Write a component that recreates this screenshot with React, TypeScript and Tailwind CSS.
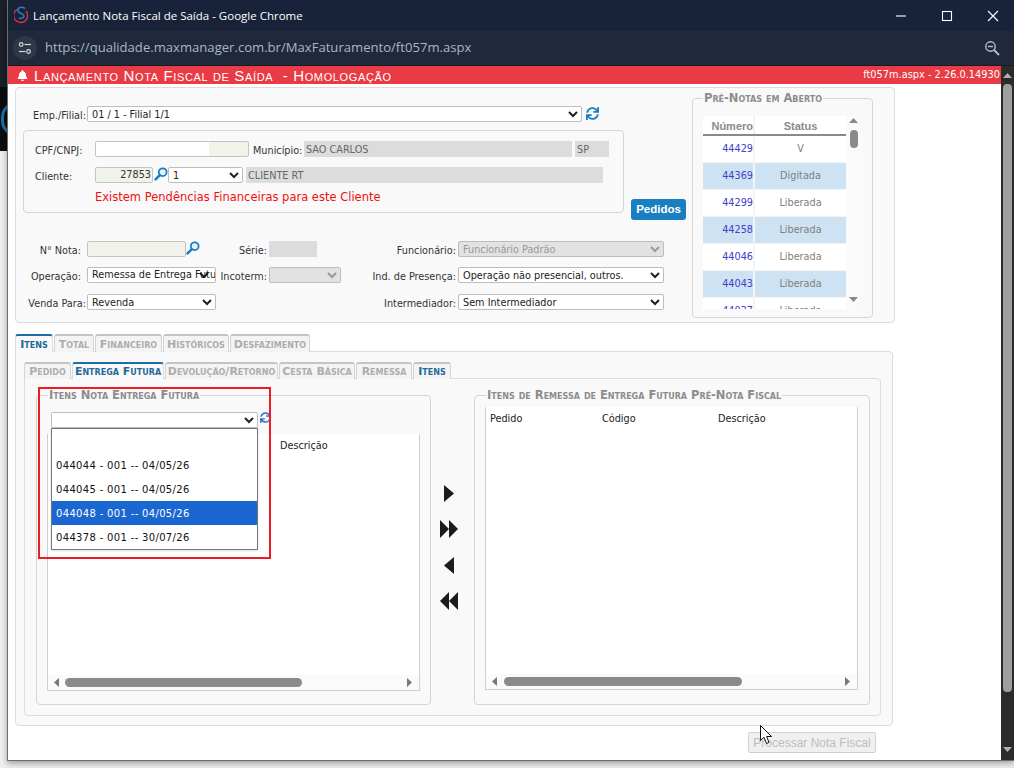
import React from "react";
import { FaBell, FaSync } from "react-icons/fa";

const Tri = ({ dir, w, h, color, className = "" }: { dir: "u" | "d" | "l" | "r"; w: number; h: number; color: string; className?: string }) => {
  const pts = { u: `0,${h} ${w},${h} ${w / 2},0`, d: `0,0 ${w},0 ${w / 2},${h}`, l: `${w},0 ${w},${h} 0,${h / 2}`, r: `0,0 0,${h} ${w},${h / 2}` }[dir];
  return (
    <svg width={w} height={h} className={className}>
      <polygon points={pts} fill={color} />
    </svg>
  );
};

const Mag = () => (
  <svg width="14" height="14" viewBox="0 0 14 14" className="shrink-0">
    <circle cx="8.7" cy="5.2" r="3.9" fill="#e8f2fa" stroke="#1a7fc1" strokeWidth="1.8" />
    <line x1="5.8" y1="8.2" x2="1.6" y2="12.4" stroke="#1a7fc1" strokeWidth="2.6" strokeLinecap="round" />
  </svg>
);

const Lbl = ({ w, children }: { w: string; children: React.ReactNode }) => <span className={`${w} shrink-0 text-right whitespace-nowrap text-[#333] pt-[3px]`}>{children}</span>;

const Sel = ({ w, v, disabled }: { w: string; v: string; disabled?: boolean }) => (
  <select
    disabled={disabled}
    defaultValue={v}
    className={`${w} h-[16px] shrink-0 rounded-[2px] border border-[#bdbdbd] pl-0 ${disabled ? "bg-[#e2e2e2] text-[#999]" : "bg-white text-[#222]"}`}
  >
    <option>{v}</option>
  </select>
);

const Gray = ({ w, children }: { w: string; children?: React.ReactNode }) => <div className={`${w} h-[16px] shrink-0 bg-[#dcdcdc] pl-[2px] leading-[17px] text-[#666] whitespace-nowrap overflow-hidden`}>{children}</div>;

const Tab = ({ w, h = "h-[18px]", label, active, blue }: { w: string; h?: string; label: string; active?: boolean; blue?: boolean }) => (
  <div
    className={`${w} ${h} relative top-[1px] flex shrink-0 items-center justify-center whitespace-nowrap rounded-t-[3px] border border-b-0 border-t-2 text-[11px] font-bold leading-none [font-variant:small-caps] ${
      active ? "border-[#dddddd] border-t-[#1a6ea8] bg-[#f9f9f9] text-[#1f6a99]" : `border-[#d4d4d4] border-t-[#c4c4c4] bg-[#f4f4f4] ${blue ? "text-[#1f6a99]" : "text-[#adadad]"}`
    }`}
  >
    {label}
  </div>
);

const Legend = ({ left, children }: { left: string; children: React.ReactNode }) => (
  <div className={`absolute ${left} top-[-7px] whitespace-nowrap bg-[#f9f9f9] px-[1px] text-[11.5px] font-bold leading-[12px] text-[#8c8c8c] [font-variant:small-caps]`}>{children}</div>
);

const HScroll = ({ thumb, ml }: { thumb: string; ml: string }) => (
  <div className="flex h-[15px] shrink-0 items-center bg-[#fafafa] pl-[6px] pr-[7px]">
    <Tri dir="l" w={5} h={9} color="#777" />
    <div className={`${thumb} ${ml} h-[9px] rounded-[5px] bg-[#8a8a8a]`} />
    <Tri dir="r" w={5} h={9} color="#777" className="ml-auto" />
  </div>
);

const rows = [
  ["44429", "V"],
  ["44369", "Digitada"],
  ["44299", "Liberada"],
  ["44258", "Liberada"],
  ["44046", "Liberada"],
  ["44043", "Liberada"],
  ["44037", "Liberada"],
];

const opts = ["", "044044 - 001 -- 04/05/26", "044045 - 001 -- 04/05/26", "044048 - 001 -- 04/05/26", "044378 - 001 -- 30/07/26"];

export default function App() {
  return (
    <div className="relative flex h-[768px] w-[1014px] overflow-hidden bg-[#ececec] font-['DejaVu_Sans',sans-serif] text-[9.7px]">
      <div className="flex w-[7px] shrink-0 flex-col">
        <div className="h-[87px] bg-[#1c2029]" />
        <div className="relative h-[64px] overflow-hidden bg-[#0d0d0d]">
          <div className="absolute left-[1px] top-[15px] h-[34px] w-[30px] rounded-full border-[3px] border-[#1a6ea8]" />
        </div>
        <div className="flex-1 bg-[#efefef]" />
      </div>

      <div className="z-10 flex h-[761px] w-[1007px] shrink-0 flex-col border-b border-l border-[#6e6e6e] bg-white shadow-[0_2px_6px_rgba(0,0,0,0.35)]">
        <div className="flex h-[31px] shrink-0 items-center bg-[#18233a] text-white">
          <svg width="14" height="18" viewBox="0 0 14 18" className="ml-[6px] mt-[-1px]">
            <path d="M3 3.5 A7 7 0 1 0 12 5" fill="none" stroke="#d9333f" strokeWidth="1.4" />
            <path d="M11 2.5 C7 0 3 2 4 5 C5 8 10 7 10 10 C10 12 7 13 5 12" fill="none" stroke="#2f7fc4" strokeWidth="1.5" />
          </svg>
          <span className="ml-[5px] font-['Open_Sans',sans-serif] text-[11.5px]">Lançamento Nota Fiscal de Saída - Google Chrome</span>
          <svg width="112" height="16" viewBox="0 0 112 16" className="ml-auto mr-[6px]" stroke="#fff" fill="none" strokeWidth="1.1">
            <line x1="0" y1="8" x2="10" y2="8" />
            <rect x="46.5" y="3.5" width="9" height="9" />
            <path d="M92 3 L102 13 M102 3 L92 13" />
          </svg>
        </div>
        <div className="flex h-[35px] shrink-0 items-center border-b border-[#141c2c] bg-[#1f293b]">
          <div className="ml-[5px] flex h-[24px] w-[24px] items-center justify-center rounded-full bg-[#2f3849]">
            <svg width="14" height="14" viewBox="0 0 14 14" fill="none" stroke="#d5d9df" strokeWidth="1.2">
              <circle cx="3.2" cy="3.5" r="1.8" />
              <line x1="6.5" y1="3.5" x2="13" y2="3.5" />
              <circle cx="10.5" cy="10.5" r="1.8" />
              <line x1="1" y1="10.5" x2="7.5" y2="10.5" />
            </svg>
          </div>
          <span className="ml-[8px] font-['Open_Sans',sans-serif] text-[13.1px] text-[#a9b6c6]">https://qualidade.maxmanager.com.br/MaxFaturamento/ft057m.aspx</span>
          <svg width="16" height="16" viewBox="0 0 16 16" className="ml-auto mr-[14px]" fill="none" stroke="#b8c0cc" strokeWidth="1.4">
            <circle cx="6.5" cy="6.5" r="4.7" />
            <line x1="4" y1="6.5" x2="9" y2="6.5" />
            <line x1="10" y1="10" x2="15" y2="15" strokeWidth="1.8" />
          </svg>
        </div>

        <div className="flex min-h-0 flex-1">
          <div className="flex w-[993px] shrink-0 flex-col">
            <div className="flex h-[18px] shrink-0 items-center bg-[#e93b45] text-white">
              <FaBell className="ml-[9px] text-[11px]" />
              <span className="ml-[6px] font-['Liberation_Sans',sans-serif] text-[15px] leading-none tracking-[0.63px] [font-variant:small-caps] whitespace-pre">Lançamento Nota Fiscal de Saída  - Homologação</span>
              <span className="ml-auto pr-[1px] pt-[1px] text-[9.8px] font-['DejaVu_Sans',sans-serif]">ft057m.aspx - 2.26.0.14930</span>
            </div>

            {/* top panel */}
            <div className="ml-[7px] mt-[3px] flex h-[236px] w-[880px] shrink-0 rounded-[4px] border border-[#dcdcdc] bg-[#f9f9f9]">
              <div className="w-[676px] shrink-0 pt-[18px]">
                <div className="flex h-[16px] items-start">
                  <Lbl w="w-[70px]">Emp./Filial:</Lbl>
                  <Sel w="w-[495px] ml-[1px]" v="01 / 1 - Filial 1/1" />
                  <FaSync className="ml-[4px] mt-[1px] text-[13px] text-[#1a7fc1]" />
                </div>
                <div className="mt-[8px] flex items-start">
                  <div className="ml-[7px] h-[83px] w-[601px] shrink-0 rounded-[4px] border border-[#d4d4d4] pl-[11px] pt-[10px]">
                    <div className="flex h-[16px] items-start">
                      <span className="w-[60px] shrink-0 pt-[3px] text-[#333]">CPF/CNPJ:</span>
                      <div className="flex h-[16px] w-[154px] shrink-0 justify-start rounded-[2px] border border-[#c4c4c4] bg-[#f0f3ea]">
                        <div className="h-full w-[113px] bg-white" />
                      </div>
                      <span className="ml-[4px] w-[51px] shrink-0 pt-[3px] text-[#333]">Município:</span>
                      <Gray w="w-[268px]">SAO CARLOS</Gray>
                      <Gray w="w-[34px] ml-[3px]">SP</Gray>
                    </div>
                    <div className="mt-[10px] flex h-[16px] items-start">
                      <span className="w-[60px] shrink-0 pt-[3px] text-[#333]">Cliente:</span>
                      <div className="h-[16px] w-[58px] shrink-0 rounded-[2px] border border-[#c4c4c4] bg-[#f0f3ea] pr-[1px] text-right leading-[14px] text-[#333]">27853</div>
                      <span className="ml-[1px] w-[14px] shrink-0"><Mag /></span>
                      <Sel w="w-[75px]" v="1" />
                      <Gray w="w-[357px] ml-[3px]">CLIENTE RT</Gray>
                    </div>
                    <div className="ml-[60px] mt-[6px] whitespace-nowrap text-[11.5px] leading-[16px] text-[#f01010]">Existem Pendências Financeiras para este Cliente</div>
                  </div>
                  <button className="ml-[7px] mt-[69px] h-[21px] w-[55px] shrink-0 rounded-[3px] bg-[#1a7fc1] font-['Liberation_Sans',sans-serif] text-[11.5px] font-bold text-white">Pedidos</button>
                </div>
                <div className="mt-[21px] flex h-[16px] items-start">
                  <Lbl w="w-[65px] mr-[5px]">N° Nota:</Lbl>
                  <div className="ml-[1px] h-[16px] w-[99px] shrink-0 rounded-[2px] border border-[#c4c4c4] bg-[#f0f3ea]" />
                  <span className="w-[14px] shrink-0"><Mag /></span>
                  <Lbl w="w-[67px]">Série:</Lbl>
                  <Gray w="w-[48px] ml-[2px]" />
                  <Lbl w="w-[139px]">Funcionário:</Lbl>
                  <Sel w="w-[206px] ml-[2px]" v="Funcionário Padrão" disabled />
                </div>
                <div className="mt-[10px] flex h-[16px] items-start">
                  <Lbl w="w-[65px] mr-[5px]">Operação:</Lbl>
                  <div className="relative ml-[1px] h-[16px] w-[129px] shrink-0 overflow-hidden whitespace-nowrap rounded-[2px] border border-[#bdbdbd] bg-white pl-[4px] leading-[14px] text-[#222]">
                    Remessa de Entrega Futura
                    <svg width="10" height="6" viewBox="0 0 10 6" className="absolute right-[6px] top-[4px]">
                      <path d="M1 1 L5 5 L9 1" fill="none" stroke="#111" strokeWidth="1.8" />
                    </svg>
                  </div>
                  <Lbl w="w-[51px]">Incoterm:</Lbl>
                  <Sel w="w-[72px] ml-[2px]" v="" disabled />
                  <Lbl w="w-[115px]">Ind. de Presença:</Lbl>
                  <Sel w="w-[206px] ml-[2px]" v="Operação não presencial, outros." />
                </div>
                <div className="mt-[11px] flex h-[16px] items-start">
                  <Lbl w="w-[70px]">Venda Para:</Lbl>
                  <Sel w="w-[129px] ml-[1px]" v="Revenda" />
                  <Lbl w="w-[240px]">Intermediador:</Lbl>
                  <Sel w="w-[206px] ml-[2px]" v="Sem Intermediador" />
                </div>
              </div>

              <div className="relative mt-[10px] h-[220px] w-[181px] shrink-0 rounded-[4px] border border-[#d4d4d4] pl-[10px] pt-[17px]">
                <Legend left="left-[10px]">Pré-Notas em Aberto</Legend>
                <div className="flex h-[193px] overflow-hidden">
                  <div className="w-[143px] shrink-0">
                    <div className="flex h-[20px] border-b-2 border-[#8a8a8a] bg-white font-['Liberation_Sans',sans-serif] text-[11px] font-bold text-[#8a8a8a]">
                      <span className="w-[52px] border-r-2 border-[#f4f4f4] pt-[2px] text-right">Número</span>
                      <span className="flex-1 pt-[2px] text-center">Status</span>
                    </div>
                    {rows.map(([n, s], i) => (
                      <div key={n} className={`flex h-[27px] items-center border-b border-[#f4f4f4] ${i % 2 ? "bg-[#cde3f3]" : "bg-white"}`}>
                        <span className="flex h-full w-[52px] items-center justify-end border-r-2 border-[#f4f4f4] text-[#4040c8]">{n}</span>
                        <span className="flex-1 text-center text-[#808080]">{s}</span>
                      </div>
                    ))}
                  </div>
                  <div className="flex w-[15px] shrink-0 flex-col items-center bg-[#fafafa] pt-[2px]">
                    <Tri dir="u" w={9} h={5} color="#8a8a8a" />
                    <div className="mt-[7px] h-[18px] w-[8px] rounded-[4px] bg-[#8a8a8a]" />
                    <Tri dir="d" w={9} h={5} color="#8a8a8a" className="mb-[7px] mt-auto" />
                  </div>
                </div>
              </div>
            </div>

            {/* tabs */}
            <div className="ml-[7px] mt-[10px] flex gap-[1px]">
              <Tab w="w-[38px]" label="Itens" active />
              <Tab w="w-[40px]" label="Total" />
              <Tab w="w-[67px]" label="Financeiro" />
              <Tab w="w-[66px]" label="Históricos" />
              <Tab w="w-[80px]" label="Desfazimento" />
            </div>
            <div className="ml-[7px] h-[375px] w-[878px] shrink-0 rounded-b-[4px] rounded-tr-[4px] border border-[#dcdcdc] bg-[#f9f9f9] pl-[8px] pt-[9px]">
              <div className="relative z-10 flex gap-[1px]">
                <Tab w="w-[47px]" h="h-[17px]" label="Pedido" />
                <Tab w="w-[92px]" h="h-[17px]" label="Entrega Futura" active />
                <Tab w="w-[113px]" h="h-[17px]" label="Devolução/Retorno" />
                <Tab w="w-[76px]" h="h-[17px]" label="Cesta Básica" />
                <Tab w="w-[56px]" h="h-[17px]" label="Remessa" />
                <Tab w="w-[38px]" h="h-[17px]" label="Itens" blue />
              </div>
              <div className="flex h-[338px] w-[857px] rounded-b-[4px] rounded-tr-[4px] border border-[#dcdcdc] pl-[11px] pt-[16px]">
                <div className="relative h-[310px] w-[395px] shrink-0 rounded-[4px] border border-[#d4d4d4] pl-[10px] pt-[38px]">
                  <Legend left="left-[11px]">Itens Nota Entrega Futura</Legend>
                  <div className="absolute left-[14px] top-[16px] z-20 flex items-start">
                    <Sel w="w-[207px]" v="" />
                    <FaSync className="ml-[2px] text-[11px] text-[#2d6ed3]" />
                  </div>
                  <div className="flex h-[257px] w-[373px] flex-col border-x border-b border-[#cfcfcf] bg-white">
                    <div className="flex-1 pl-[232px] pt-[5px] text-[#222]">Descrição</div>
                    <HScroll thumb="w-[237px]" ml="ml-[6px]" />
                  </div>
                  <div className="absolute left-[14px] top-[32px] z-20 w-[207px] border border-[#777] bg-white text-[10px] tracking-[0.33px] text-[#111] shadow-sm">
                    {opts.map((o, i) => (
                      <div key={i} className={`h-[24px] pl-[4px] pt-[6px] leading-[14px] ${i === 3 ? "bg-[#1a67d2] text-white" : ""}`}>{o}</div>
                    ))}
                  </div>
                </div>
                <div className="flex w-[43px] shrink-0 flex-col items-center pr-[7px] pt-[90px]">
                  <Tri dir="r" w={10} h={17} color="#1c1c1c" />
                  <div className="mt-[18px] flex"><Tri dir="r" w={9} h={18} color="#1c1c1c" /><Tri dir="r" w={9} h={18} color="#1c1c1c" /></div>
                  <Tri dir="l" w={10} h={17} color="#1c1c1c" className="mt-[19px]" />
                  <div className="mt-[18px] flex"><Tri dir="l" w={9} h={18} color="#1c1c1c" /><Tri dir="l" w={9} h={18} color="#1c1c1c" /></div>
                </div>
                <div className="relative h-[310px] w-[396px] shrink-0 rounded-[4px] border border-[#d4d4d4] pl-[10px] pt-[11px]">
                  <Legend left="left-[11px]">Itens de Remessa de Entrega Futura Pré-Nota Fiscal</Legend>
                  <div className="flex h-[283px] w-[373px] flex-col border-x border-b border-[#cfcfcf] bg-white">
                    <div className="flex flex-1 items-start pt-[5px] text-[#222]">
                      <span className="ml-[4px] w-[112px]">Pedido</span>
                      <span className="w-[116px]">Código</span>
                      <span>Descrição</span>
                    </div>
                    <HScroll thumb="w-[238px]" ml="ml-[7px]" />
                  </div>
                </div>
              </div>
            </div>

            <div className="mt-[6px] flex justify-end pr-[125px]">
              <button className="h-[21px] w-[128px] rounded-[2px] border border-[#d0d0d0] bg-[#f0f0f0] font-['Liberation_Sans',sans-serif] text-[12px] text-[#bdbdbd]">Processar Nota Fiscal</button>
            </div>
          </div>

          <div className="flex w-[13px] shrink-0 flex-col items-center bg-[#2b2b2b] pt-[7px]">
            <Tri dir="u" w={9} h={5} color="#b0b0b0" />
            <div className="mt-[6px] h-[608px] w-[9px] rounded-[4px] bg-[#9e9e9e]" />
            <Tri dir="d" w={9} h={5} color="#b0b0b0" className="mb-[8px] mt-auto" />
          </div>
        </div>
      </div>

      {/* annotation */}
      <div className="absolute left-[38px] top-[387px] z-30 h-[172px] w-[233px] border-2 border-[#ed1c24]" />
      {/* mouse cursor */}
      <svg width="14" height="20" viewBox="0 0 14 20" className="absolute left-[760px] top-[725px] z-30">
        <path d="M0.5 0.5 L0.5 15.5 L4 12.3 L6.5 18.5 L9 17.4 L6.6 11.5 L11.5 11.5 Z" fill="#fff" stroke="#111" strokeWidth="1" />
      </svg>
    </div>
  );
}
